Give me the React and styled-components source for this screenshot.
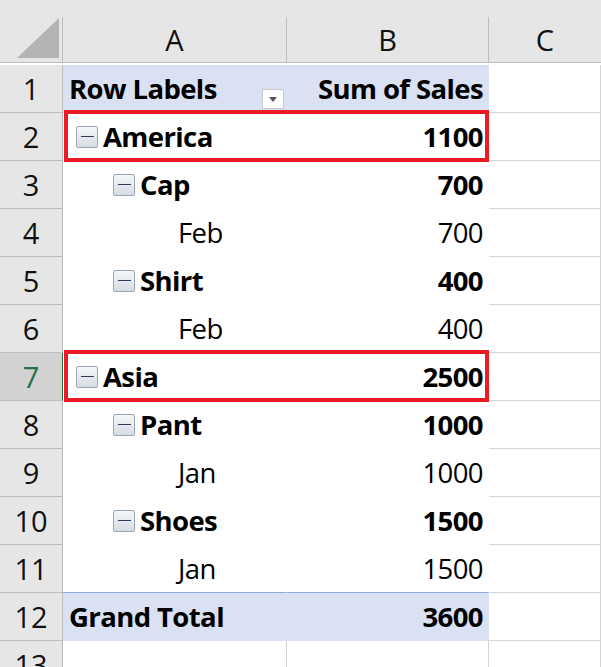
import React from "react";
import styled, { createGlobalStyle } from "styled-components";

const G = createGlobalStyle`
  body { margin: 0; background: #fff; font-family: "Open Sans", "Noto Sans", sans-serif; overflow: hidden; }
`;
const Top = styled.div`
  height: 17px; background: #e6e6e6;
`;
const Grid = styled.div`
  display: grid; grid-template-columns: 63px 224px 202px 112px;
  grid-auto-rows: 48px;
  font-size: 27.5px; letter-spacing: -0.6px;
`;
const Head = styled.div`
  background: ${p => p.sel ? "#d2d2d2" : "#e6e6e6"};
  color: ${p => p.sel ? "#217346" : "#111"};
  border-right: 1px solid ${p => p.sel ? "#217346" : "#bdbdbd"};
  border-bottom: 1px solid #bdbdbd;
  display: flex; align-items: center; justify-content: center;
  font-size: 29px; letter-spacing: 0; font-weight: 400; box-sizing: border-box;
  height: ${p => p.h || 48}px;
`;
const Corner = styled(Head)`
  justify-content: flex-end; align-items: flex-end; padding: 0 3px 4px 0;
`;
const Cell = styled.div`
  position: relative; box-sizing: border-box;
  background: ${p => p.blue ? "#d9e1f2" : "#fff"};
  border-right: 1px solid ${p => p.pivot ? (p.blue ? "#d9e1f2" : "#fff") : "#d4d4d4"};
  border-bottom: 1px solid ${p => p.line ? "#8ea9db" : p.pivot ? (p.blue ? "#d9e1f2" : "#fff") : "#d4d4d4"};
  display: flex; align-items: center;
  justify-content: ${p => p.right ? "flex-end" : "flex-start"};
  padding: 0 ${p => p.right ? 5 : 0}px 0 ${p => p.indent || 6}px;
  font-weight: ${p => p.bold ? 700 : 400}; color: #000; white-space: nowrap;
`;
const Minus = styled.span`
  width: 22px; height: 22px; box-sizing: border-box; border: 1px solid #9aa6b8; border-radius: 2px;
  background: linear-gradient(#f4f6f9, #d7dce4); margin-right: 5px; display: inline-flex;
  align-items: center; justify-content: center;
  &::after { content: ""; width: 13px; height: 1px; background: #2d3a55; }
`;
const Drop = styled.span`
  position: absolute; right: 2px; bottom: 3px; width: 22px; height: 20px; background: #fff;
  border: 1px solid #c8c8c8; box-sizing: border-box; display: flex; align-items: center; justify-content: center;
  &::after { content: ""; border: 4px solid transparent; border-top: 5px solid #555; margin-top: 5px; }
`;
const RedBox = styled.div`
  position: absolute; left: 1px; top: -3px; width: 425px; height: 52px; box-sizing: border-box;
  border: 4px solid #ed1c24; z-index: 2; pointer-events: none;
`;

const rows = [
  { l: "America", v: "1100", lvl: 0, red: true },
  { l: "Cap", v: "700", lvl: 1 },
  { l: "Feb", v: "700", lvl: 2 },
  { l: "Shirt", v: "400", lvl: 1 },
  { l: "Feb", v: "400", lvl: 2 },
  { l: "Asia", v: "2500", lvl: 0, red: true, sel: true },
  { l: "Pant", v: "1000", lvl: 1 },
  { l: "Jan", v: "1000", lvl: 2 },
  { l: "Shoes", v: "1500", lvl: 1 },
  { l: "Jan", v: "1500", lvl: 2 },
];

export default function App() {
  return (
    <>
      <G />
      <Top />
      <Grid>
        <Corner h={46}>
          <svg width="45" height="40"><polygon points="45,0 45,40 3,40" fill="#b4b4b4" /></svg>
        </Corner>
        <Head h={46}>A</Head>
        <Head h={46}>B</Head>
        <Head h={46} style={{ borderRight: "none" }}>C</Head>

        <Head>1</Head>
        <Cell pivot blue bold>Row Labels<Drop /></Cell>
        <Cell pivot blue bold right>Sum of Sales</Cell>
        <Cell />
        {rows.map((r, i) => (
          <React.Fragment key={i}>
            <Head sel={r.sel}>{i + 2}</Head>
            <Cell pivot bold={r.lvl < 2} indent={[13, 50, 115][r.lvl]} line={i === 9}>
              {r.red && <RedBox />}
              {r.lvl < 2 && <Minus />}{r.l}
            </Cell>
            <Cell pivot bold={r.lvl < 2} right line={i === 9}>{r.v}</Cell>
            <Cell />
          </React.Fragment>
        ))}
        <Head>12</Head>
        <Cell pivot blue bold>Grand Total</Cell>
        <Cell pivot blue bold right>3600</Cell>
        <Cell />
        <Head>13</Head>
        <Cell /><Cell /><Cell />
      </Grid>
    </>
  );
}
